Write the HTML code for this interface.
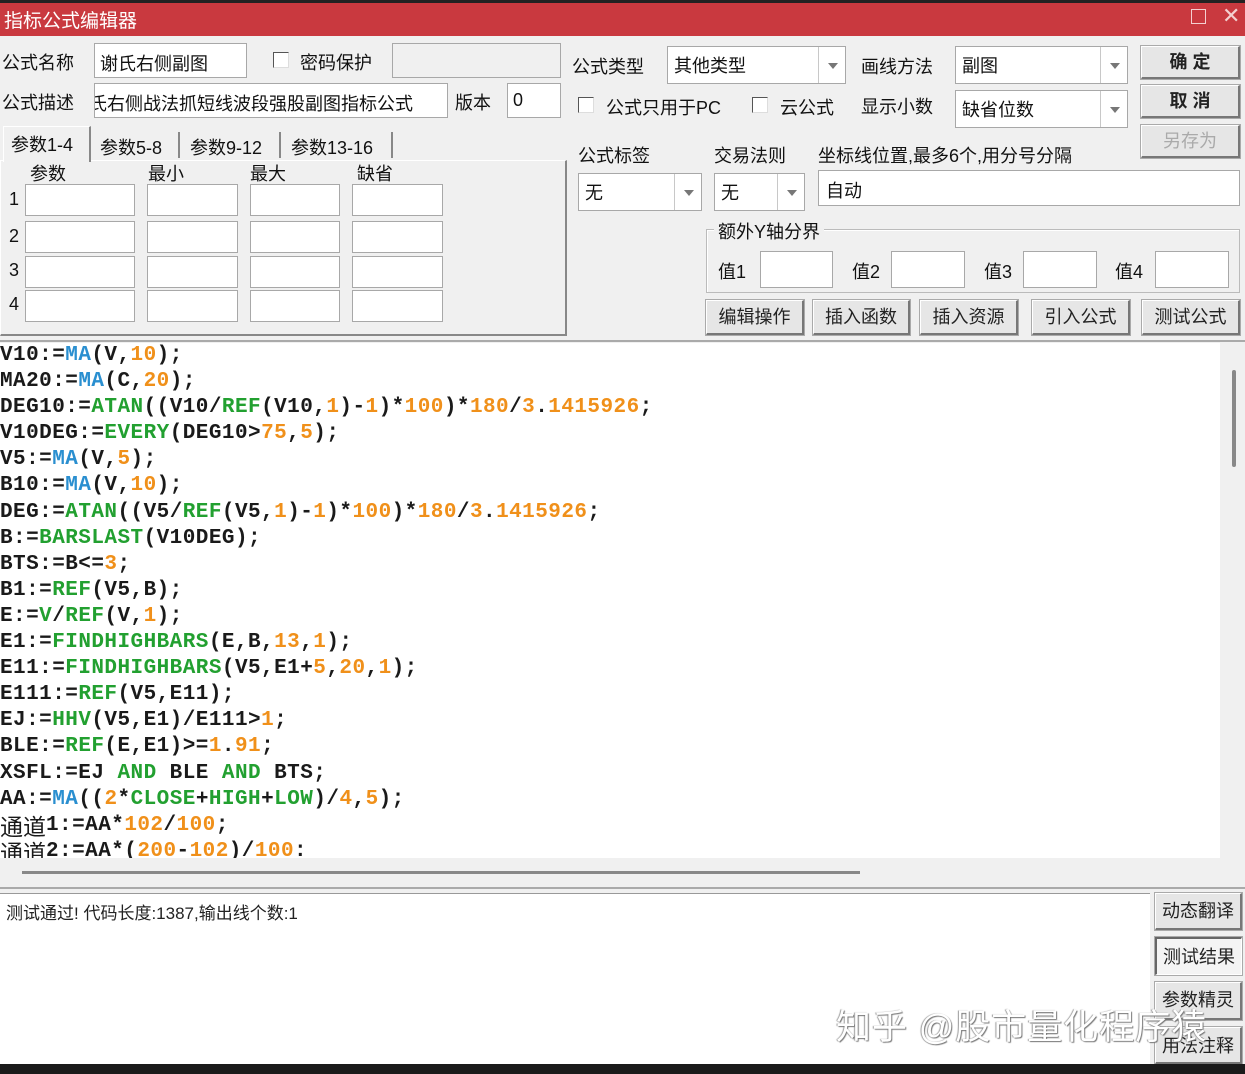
<!DOCTYPE html>
<html><head><meta charset="utf-8">
<style>
*{box-sizing:border-box;margin:0;padding:0}
body{width:1245px;height:1074px;position:relative;overflow:hidden;background:#f0f0f0;font-family:"Liberation Sans","Noto Sans CJK SC",sans-serif;font-size:18px;color:#111}
.a{position:absolute;white-space:nowrap}
.in{position:absolute;background:#fff;border:1px solid #a8a8a8}
.cb{position:absolute;width:16px;height:16px;border:1px solid #555;background:#fff;border-right-color:#ddd;border-bottom-color:#ddd}
.combo{position:absolute;background:#fff;border:1px solid #a8a8a8}
.combo .dd{position:absolute;right:0;top:0;bottom:0;width:27px;border-left:1px solid #c8c8c8}
.combo .dd:after{content:"";position:absolute;left:9px;top:50%;margin-top:-2px;border-left:5px solid transparent;border-right:5px solid transparent;border-top:6px solid #777}
.combo span{position:absolute;left:6px;top:50%;transform:translateY(-50%)}
.btn{position:absolute;background:#e6e6e6;border:1px solid #fff;border-right:2px solid #777;border-bottom:2px solid #777;outline:1px solid #aaa;text-align:center;font-weight:bold;color:#222}
#code{position:absolute;left:0;top:343px;width:1220px;height:515px;background:#fff;overflow:hidden;font-family:"Liberation Mono","Noto Sans CJK SC",monospace;font-weight:bold;font-size:21px;letter-spacing:0.45px;line-height:26.1px;color:#1a1a1a}
#code div{height:26.1px;white-space:pre;overflow:visible}
.cj{font-weight:normal;font-family:'Noto Sans CJK SC',sans-serif;font-size:23px;line-height:20px;display:inline-block;height:20px;vertical-align:top;margin-top:2px;letter-spacing:0}
.b{color:#2a8fd0}.g{color:#22a030}.o{color:#f0901a}
</style></head><body>
<div class="a" style="left:0;top:0;width:1245px;height:3px;background:#222"></div>
<div class="a" style="left:0;top:3px;width:1245px;height:33px;background:#c9393f"></div>
<div class="a" style="left:4px;top:6px;color:#fff;font-size:19px">指标公式编辑器</div>
<div class="a" style="left:1191px;top:9px;width:15px;height:15px;border:1.5px solid #f4d0d0"></div>
<div class="a" style="left:1222px;top:3px;color:#f4d0d0;font-size:22px">✕</div>

<div class="a" style="left:2px;top:49px">公式名称</div>
<div class="in" style="left:94px;top:43px;width:153px;height:35px"><span class="a" style="left:5px;top:6px">谢氏右侧副图</span></div>
<div class="cb" style="left:273px;top:52px"></div>
<div class="a" style="left:300px;top:49px">密码保护</div>
<div class="in" style="left:392px;top:43px;width:169px;height:35px;background:#f0f0f0"></div>
<div class="a" style="left:2px;top:89px">公式描述</div>
<div class="in" style="left:94px;top:83px;width:354px;height:35px;overflow:hidden"><span class="a" style="left:-6px;top:6px">氏右侧战法抓短线波段强股副图指标公式</span></div>
<div class="a" style="left:455px;top:89px">版本</div>
<div class="in" style="left:507px;top:83px;width:54px;height:35px"><span class="a" style="left:5px;top:6px">0</span></div>

<div class="a" style="left:572px;top:53px">公式类型</div>
<div class="combo" style="left:667px;top:46px;width:179px;height:38px"><span>其他类型</span><div class="dd"></div></div>
<div class="a" style="left:861px;top:53px">画线方法</div>
<div class="combo" style="left:955px;top:46px;width:173px;height:38px"><span>副图</span><div class="dd"></div></div>
<div class="btn" style="left:1141px;top:46px;width:99px;height:33px;line-height:30px">确 定</div>
<div class="cb" style="left:578px;top:97px"></div>
<div class="a" style="left:606px;top:94px">公式只用于PC</div>
<div class="cb" style="left:752px;top:97px"></div>
<div class="a" style="left:780px;top:94px">云公式</div>
<div class="a" style="left:861px;top:93px">显示小数</div>
<div class="combo" style="left:955px;top:90px;width:173px;height:38px"><span>缺省位数</span><div class="dd"></div></div>
<div class="btn" style="left:1141px;top:85px;width:99px;height:33px;line-height:30px">取 消</div>
<div class="btn" style="left:1141px;top:125px;width:99px;height:33px;line-height:30px;color:#aaa;font-weight:normal">另存为</div>

<div class="a" style="left:0;top:160px;width:567px;height:176px;border:1px solid #fff;border-right:2px solid #888;border-bottom:2px solid #888"></div>
<div class="a" style="left:3px;top:126px;width:88px;height:36px;background:#f0f0f0;border-left:1px solid #fff;border-right:2px solid #888;border-top:1px solid #fff"></div>
<div class="a" style="left:11px;top:131px">参数1-4</div>
<div class="a" style="left:100px;top:134px">参数5-8</div><div class="a" style="left:178px;top:132px;width:2px;height:26px;background:#888"></div>
<div class="a" style="left:190px;top:134px">参数9-12</div><div class="a" style="left:279px;top:132px;width:2px;height:26px;background:#888"></div>
<div class="a" style="left:291px;top:134px">参数13-16</div><div class="a" style="left:391px;top:132px;width:2px;height:26px;background:#888"></div>
<div class="a" style="left:30px;top:160px">参数</div>
<div class="a" style="left:148px;top:160px">最小</div>
<div class="a" style="left:250px;top:160px">最大</div>
<div class="a" style="left:357px;top:160px">缺省</div>
<div class="a" style="left:9px;top:189px">1</div><div class="a" style="left:9px;top:226px">2</div><div class="a" style="left:9px;top:260px">3</div><div class="a" style="left:9px;top:294px">4</div>
<div class="in" style="left:25px;top:184px;width:110px;height:32px"></div><div class="in" style="left:147px;top:184px;width:91px;height:32px"></div><div class="in" style="left:250px;top:184px;width:90px;height:32px"></div><div class="in" style="left:352px;top:184px;width:91px;height:32px"></div>
<div class="in" style="left:25px;top:221px;width:110px;height:32px"></div><div class="in" style="left:147px;top:221px;width:91px;height:32px"></div><div class="in" style="left:250px;top:221px;width:90px;height:32px"></div><div class="in" style="left:352px;top:221px;width:91px;height:32px"></div>
<div class="in" style="left:25px;top:256px;width:110px;height:32px"></div><div class="in" style="left:147px;top:256px;width:91px;height:32px"></div><div class="in" style="left:250px;top:256px;width:90px;height:32px"></div><div class="in" style="left:352px;top:256px;width:91px;height:32px"></div>
<div class="in" style="left:25px;top:290px;width:110px;height:32px"></div><div class="in" style="left:147px;top:290px;width:91px;height:32px"></div><div class="in" style="left:250px;top:290px;width:90px;height:32px"></div><div class="in" style="left:352px;top:290px;width:91px;height:32px"></div>

<div class="a" style="left:578px;top:142px">公式标签</div>
<div class="a" style="left:714px;top:142px">交易法则</div>
<div class="a" style="left:818px;top:142px">坐标线位置,最多6个,用分号分隔</div>
<div class="combo" style="left:578px;top:173px;width:124px;height:38px"><span>无</span><div class="dd"></div></div>
<div class="combo" style="left:714px;top:173px;width:91px;height:38px"><span>无</span><div class="dd"></div></div>
<div class="in" style="left:818px;top:170px;width:422px;height:36px"><span class="a" style="left:7px;top:6px">自动</span></div>
<div class="a" style="left:706px;top:229px;width:534px;height:64px;border:1px solid #bbb;box-shadow:1px 1px 0 #fff inset"></div>
<div class="a" style="left:714px;top:218px;background:#f0f0f0;padding:0 4px">额外Y轴分界</div>
<div class="a" style="left:718px;top:258px">值1</div><div class="in" style="left:760px;top:251px;width:73px;height:37px"></div>
<div class="a" style="left:852px;top:258px">值2</div><div class="in" style="left:891px;top:251px;width:74px;height:37px"></div>
<div class="a" style="left:984px;top:258px">值3</div><div class="in" style="left:1023px;top:251px;width:74px;height:37px"></div>
<div class="a" style="left:1115px;top:258px">值4</div><div class="in" style="left:1155px;top:251px;width:74px;height:37px"></div>
<div class="btn" style="left:706px;top:300px;width:98px;height:35px;line-height:33px;font-weight:normal">编辑操作</div>
<div class="btn" style="left:813px;top:300px;width:97px;height:35px;line-height:33px;font-weight:normal">插入函数</div>
<div class="btn" style="left:920px;top:300px;width:98px;height:35px;line-height:33px;font-weight:normal">插入资源</div>
<div class="btn" style="left:1032px;top:300px;width:98px;height:35px;line-height:33px;font-weight:normal">引入公式</div>
<div class="btn" style="left:1142px;top:300px;width:98px;height:35px;line-height:33px;font-weight:normal">测试公式</div>
<div class="a" style="left:0;top:340px;width:1245px;height:2px;background:#aaa"></div>

<div id="code">
<div>V10:=<span class="b">MA</span>(V,<span class="o">10</span>);</div>
<div>MA20:=<span class="b">MA</span>(C,<span class="o">20</span>);</div>
<div>DEG10:=<span class="g">ATAN</span>((V10/<span class="g">REF</span>(V10,<span class="o">1</span>)-<span class="o">1</span>)*<span class="o">100</span>)*<span class="o">180</span>/<span class="o">3</span>.<span class="o">1415926</span>;</div>
<div>V10DEG:=<span class="g">EVERY</span>(DEG10&gt;<span class="o">75</span>,<span class="o">5</span>);</div>
<div>V5:=<span class="b">MA</span>(V,<span class="o">5</span>);</div>
<div>B10:=<span class="b">MA</span>(V,<span class="o">10</span>);</div>
<div>DEG:=<span class="g">ATAN</span>((V5/<span class="g">REF</span>(V5,<span class="o">1</span>)-<span class="o">1</span>)*<span class="o">100</span>)*<span class="o">180</span>/<span class="o">3</span>.<span class="o">1415926</span>;</div>
<div>B:=<span class="g">BARSLAST</span>(V10DEG);</div>
<div>BTS:=B&lt;=<span class="o">3</span>;</div>
<div>B1:=<span class="g">REF</span>(V5,B);</div>
<div>E:=<span class="g">V</span>/<span class="g">REF</span>(V,<span class="o">1</span>);</div>
<div>E1:=<span class="g">FINDHIGHBARS</span>(E,B,<span class="o">13</span>,<span class="o">1</span>);</div>
<div>E11:=<span class="g">FINDHIGHBARS</span>(V5,E1+<span class="o">5</span>,<span class="o">20</span>,<span class="o">1</span>);</div>
<div>E111:=<span class="g">REF</span>(V5,E11);</div>
<div>EJ:=<span class="g">HHV</span>(V5,E1)/E111&gt;<span class="o">1</span>;</div>
<div>BLE:=<span class="g">REF</span>(E,E1)&gt;=<span class="o">1</span>.<span class="o">91</span>;</div>
<div>XSFL:=EJ <span class="g">AND</span> BLE <span class="g">AND</span> BTS;</div>
<div>AA:=<span class="b">MA</span>((<span class="o">2</span>*<span class="g">CLOSE</span>+<span class="g">HIGH</span>+<span class="g">LOW</span>)/<span class="o">4</span>,<span class="o">5</span>);</div>
<div><span class="cj">通道</span>1:=AA*<span class="o">102</span>/<span class="o">100</span>;</div>
<div><span class="cj">通道</span>2:=AA*(<span class="o">200</span>-<span class="o">102</span>)/<span class="o">100</span>:</div>
</div>
<div class="a" style="left:1220px;top:343px;width:25px;height:515px;background:#f0f0f0"></div>
<div class="a" style="left:1232px;top:370px;width:4px;height:97px;background:#888;border-radius:2px"></div>
<div class="a" style="left:22px;top:871px;width:838px;height:3px;background:#888"></div>
<div class="a" style="left:0;top:887px;width:1245px;height:2px;background:#aaa"></div>

<div class="a" style="left:0;top:893px;width:1150px;height:171px;background:#fff;border-top:1px solid #999"></div>
<div class="a" style="left:6px;top:899px;font-size:17px;color:#222">测试通过! 代码长度:1387,输出线个数:1</div>
<div class="btn" style="left:1155px;top:893px;width:87px;height:37px;line-height:34px;font-weight:normal">动态翻译</div>
<div class="btn" style="left:1155px;top:937px;width:87px;height:38px;line-height:36px;font-weight:normal;border:2px solid #666;border-right:1px solid #fff;border-bottom:1px solid #fff;background:#f4f4f4">测试结果</div>
<div class="btn" style="left:1155px;top:982px;width:87px;height:38px;line-height:34px;font-weight:normal">参数精灵</div>
<div class="btn" style="left:1155px;top:1027px;width:87px;height:37px;line-height:36px;font-weight:normal">用法注释</div>
<div class="a" style="left:836px;top:999px;font-size:35px;color:#fff;text-shadow:1px 1px 1px #777,-1px 0 1px #999;letter-spacing:1px">知乎 @股市量化程序猿</div>
<div class="a" style="left:0;top:1064px;width:1245px;height:10px;background:#1a1a1a"></div>
</body></html>
